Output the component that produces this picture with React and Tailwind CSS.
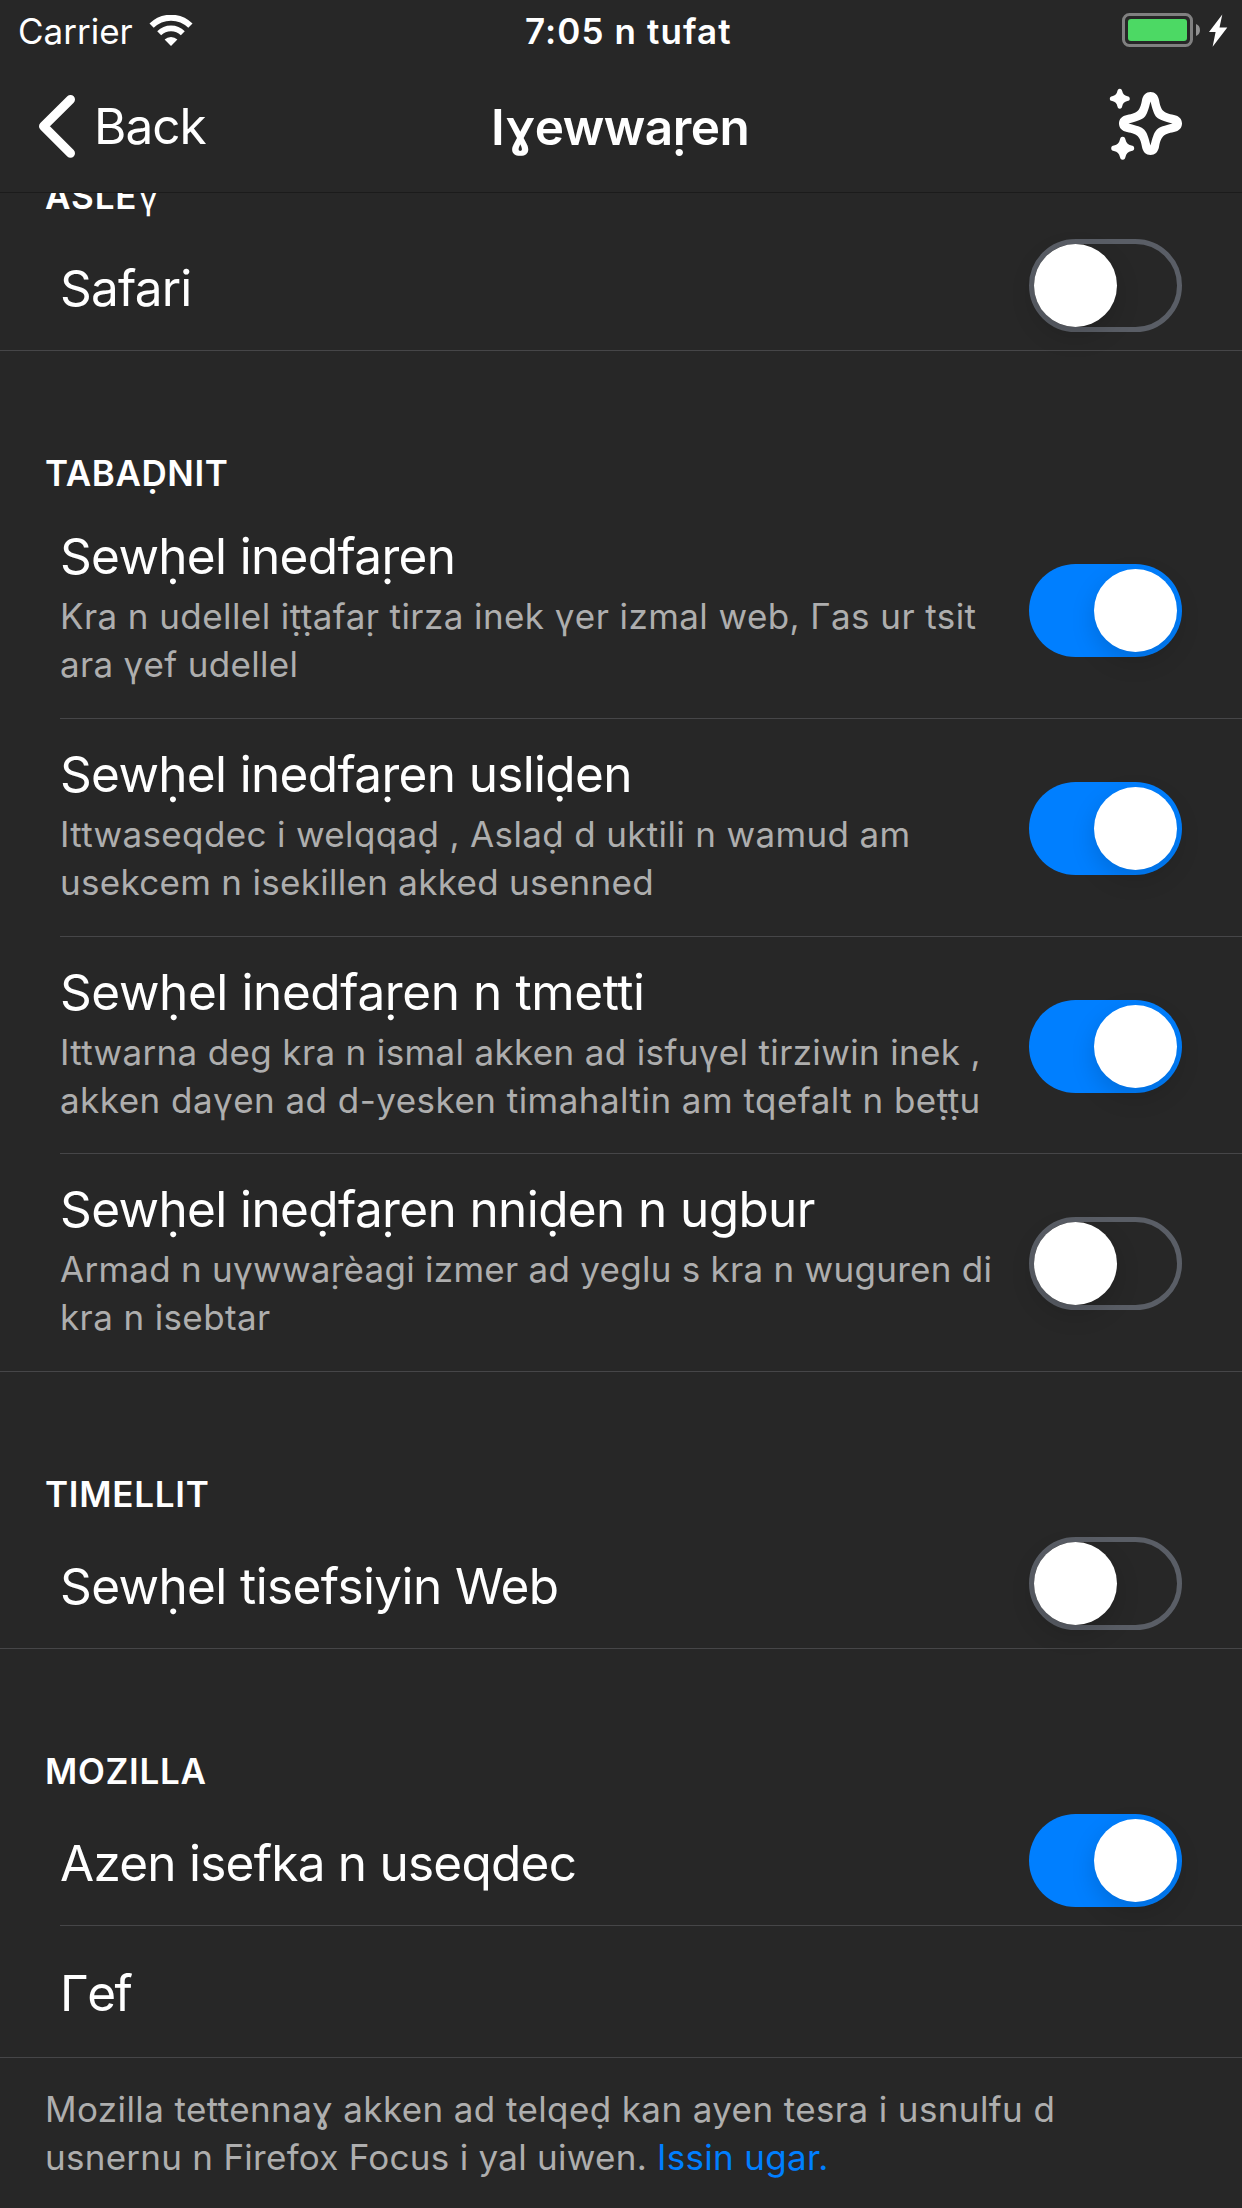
function Toggle({ on }) {
  return (
    <div
      role="switch"
      aria-checked={on}
      className={
        "flex h-[93px] w-[153px] shrink-0 items-center rounded-full " +
        (on ? "justify-end bg-[#007fff] px-[5px]" : "border-[5px] border-[#5a5e66]")
      }
    >
      <div
        className={
          "h-[83px] w-[83px] rounded-full bg-white shadow-[0_9px_24px_rgba(0,0,0,0.15)] " + (on ? "" : "-ml-[0.5px]")
        }
      />
    </div>
  );
}

function SectionTitle({ children, className }) {
  return (
    <h2 className={"flex h-[150px] shrink-0 items-end px-[45px] pb-[4px] text-[35px] leading-[48px] font-semibold text-white " + className}>
      {children}
    </h2>
  );
}

function Row({ height, last, textTop, toggleTop = "pt-[15px]", on, children }) {
  return (
    <div className={"shrink-0 " + height + (last ? " border-b border-[#464648]" : "")}>
      <div
        className={
          "flex h-full items-start justify-between pr-[60px] " +
          (last ? "pl-[60px]" : "ml-[60px] border-b border-[#464648]")
        }
      >
        <div className={textTop}>{children}</div>
        {on !== undefined && (
          <div className={toggleTop}>
            <Toggle on={on} />
          </div>
        )}
      </div>
    </div>
  );
}

function Title({ children, className = "" }) {
  return <div className={"text-[49.5px] leading-[60px] whitespace-nowrap text-white " + className}>{children}</div>;
}

const trackers = [
  {
    title: "Sewḥel inedfaṛen",
    titleClass: "tracking-[-0.66px]",
    lines: [
      ["Kra n udellel iṭṭafaṛ tirza inek γer izmal web, Γas ur tsit", "tracking-[0.42px]"],
      ["ara γef udellel", "tracking-[0.32px]"],
    ],
    on: true,
    height: "h-[218px]",
  },
  {
    title: "Sewḥel inedfaṛen usliḍen",
    titleClass: "tracking-[-0.66px]",
    lines: [
      ["Ittwaseqdec i welqqaḍ , Aslaḍ d uktili n wamud am", "tracking-[0.35px]"],
      ["usekcem n isekillen akked usenned", "tracking-[0.3px]"],
    ],
    on: true,
    height: "h-[218px]",
  },
  {
    title: "Sewḥel inedfaṛen n tmetti",
    titleClass: "tracking-[-0.4px]",
    lines: [
      ["Ittwarna deg kra n ismal akken ad isfuγel tirziwin inek ,", "tracking-[0.348px]"],
      ["akken daγen ad d-yesken timahaltin am tqefalt n beṭṭu", "tracking-[0.465px]"],
    ],
    on: true,
    height: "h-[217px]",
  },
  {
    title: "Sewḥel ineḍfaṛen nniḍen n ugbur",
    titleClass: "tracking-[-0.61px]",
    lines: [
      ["Armad n uγwwaṛèagi izmer ad yeglu s kra n wuguren di", "tracking-[0.265px]"],
      ["kra n isebtar", "tracking-[0.375px]"],
    ],
    on: false,
    height: "h-[218px]",
    last: true,
  },
];

function WifiIcon() {
  return (
    <svg className="ml-[16px] h-[32px] w-[44px]" viewBox="0 0 44 32" fill="none">
      <path d="M2.6 10.7 A 27.5 27.5 0 0 1 41.4 10.7" stroke="#fff" strokeWidth="6" />
      <path d="M10.2 18.2 A 16.8 16.8 0 0 1 33.8 18.2" stroke="#fff" strokeWidth="5.6" />
      <path d="M22 31 L15.6 24.6 A 9 9 0 0 1 28.4 24.6 Z" fill="#fff" />
    </svg>
  );
}

function BatteryIcon() {
  return (
    <svg className="h-[36px] w-[108px]" viewBox="1121 12 108 36">
      <rect x="1123.5" y="14.5" width="68" height="31" rx="6" fill="none" stroke="#808080" strokeWidth="3" />
      <rect x="1128" y="19" width="59" height="22" rx="3" fill="#4cd964" />
      <path d="M1196 24 C1201.3 25.5 1201.3 34.5 1196 36 Z" fill="#929292" />
      <path d="M1222.3 14.5 L1209 32 H1215.6 L1212.6 46.8 L1227.3 27.4 H1219.5 Z" fill="#fff" />
    </svg>
  );
}

function SparkleIcon() {
  const spark =
    "M0-10C1.6-10 2.1-9 2.4-7.6C3-4.6 4.6-3 7.6-2.4C9-2.1 10-1.6 10 0C10 1.6 9 2.1 7.6 2.4C4.6 3 3 4.6 2.4 7.6C2.1 9 1.6 10 0 10C-1.6 10-2.1 9-2.4 7.6C-3 4.6-4.6 3-7.6 2.4C-9 2.1-10 1.6-10 0C-10-1.6-9-2.1-7.6-2.4C-4.6-3-3-4.6-2.4-7.6C-2.1-9-1.6-10 0-10Z";
  return (
    <svg className="h-[76px] w-[76px]" viewBox="1108 86 76 76" fill="#fff">
      <g transform="translate(1150.5 123.5)">
        <path
          fillRule="evenodd"
          d="M0-31.5C4.5-31.5 7.5-28.5 8.5-23.5C9.5-18 10.5-15 12.7-12.7C15-10.5 18-9.5 23.5-8.5C28.5-7.5 31.5-4.5 31.5 0C31.5 4.5 28.5 7.5 23.5 8.5C18 9.5 15 10.5 12.7 12.7C10.5 15 9.5 18 8.5 23.5C7.5 28.5 4.5 31.5 0 31.5C-4.5 31.5-7.5 28.5-8.5 23.5C-9.5 18-10.5 15-12.7 12.7C-15 10.5-18 9.5-23.5 8.5C-28.5 7.5-31.5 4.5-31.5 0C-31.5-4.5-28.5-7.5-23.5-8.5C-18-9.5-15-10.5-12.7-12.7C-10.5-15-9.5-18-8.5-23.5C-7.5-28.5-4.5-31.5 0-31.5ZM0-22C-2-14-3.5-9-6.2-6.2C-9-3.5-14-2-22 0C-14 2-9 3.5-6.2 6.2C-3.5 9-2 14 0 22C2 14 3.5 9 6.2 6.2C9 3.5 14 2 22 0C14-2 9-3.5 6.2-6.2C3.5-9 2-14 0-22Z"
        />
      </g>
      <path transform="translate(1119.8 98.7)" d={spark} />
      <path transform="translate(1122.7 148.3) scale(1.15)" d={spark} />
    </svg>
  );
}

export default function App() {
  return (
    <div className="flex h-[2208px] w-[1242px] flex-col overflow-hidden bg-[#272727] font-['Inter',sans-serif]">
      <header className="h-[193px] shrink-0 border-b border-[#1b1b1b] text-white">
        <div className="grid h-[60px] grid-cols-[525px_1fr_auto] items-start pr-[13px] text-[35px] leading-[48px]">
          <div className="flex items-center pt-[7px] pl-[18px]">
            <span>Carrier</span>
            <WifiIcon />
          </div>
          <div className="pt-[7px] font-semibold tracking-[1.1px]">7:05 n tufat</div>
          <div className="pt-[12px]">
            <BatteryIcon />
          </div>
        </div>
        <div className="grid h-[132px] grid-cols-[491px_1fr_auto] items-start pr-[58px] text-[49.5px] leading-[60px]">
          <div className="flex items-start">
            <svg className="mt-[34px] ml-[36px] h-[64px] w-[42px]" viewBox="36 94 42 64" fill="none">
              <path d="M70.5 99.5L43.5 126.2L70.5 153.2" stroke="#fff" strokeWidth="9" strokeLinecap="round" strokeLinejoin="round" />
            </svg>
            <span className="mt-[36px] ml-[16px] tracking-[-1px]">Back</span>
          </div>
          <h1 className="mt-[37px] font-semibold tracking-[-0.5px]">Iɣewwaṛen</h1>
          <div className="mt-[26px]">
            <SparkleIcon />
          </div>
        </div>
      </header>

      <main className="min-h-0 flex-1 overflow-hidden">
        <div className="-mt-[119px] flex flex-col">
          <SectionTitle className="tracking-[0.9px]">
            ASLE<span className="ml-[1px] font-normal">γ</span>
          </SectionTitle>
          <Row height="h-[127px]" textTop="pt-[34px]" on={false} last>
            <Title className="tracking-[-0.8px]">Safari</Title>
          </Row>

          <SectionTitle className="tracking-[0.6px]">TABAḌNIT</SectionTitle>
          {trackers.map((t) => (
            <Row key={t.title} height={t.height} textTop="pt-[25px]" toggleTop="pt-[63px]" on={t.on} last={t.last}>
              <Title className={t.titleClass}>{t.title}</Title>
              <div className="mt-[6px] text-[35px] leading-[48px] whitespace-nowrap text-[#aeaeae]">
                {t.lines.map(([text, tracking]) => (
                  <div key={text} className={tracking}>
                    {text}
                  </div>
                ))}
              </div>
            </Row>
          ))}

          <SectionTitle className="tracking-[0.75px]">TIMELLIT</SectionTitle>
          <Row height="h-[127px]" textTop="pt-[34px]" on={false} last>
            <Title className="tracking-[-0.6px]">Sewḥel tisefsiyin Web</Title>
          </Row>

          <SectionTitle className="tracking-[0.7px]">MOZILLA</SectionTitle>
          <Row height="h-[127px]" textTop="pt-[34px]" on>
            <Title className="tracking-[-0.76px]">Azen isefka n useqdec</Title>
          </Row>
          <Row height="h-[132px]" textTop="pt-[37px]" last>
            <Title className="tracking-[-1.5px]">Γef</Title>
          </Row>

          <footer className="px-[45px] pt-[27px] text-[35px] leading-[48px] whitespace-nowrap text-[#aeaeae]">
            <div className="tracking-[0.39px]">Mozilla tettennaɣ akken ad telqeḍ kan ayen tesra i usnulfu d</div>
            <div className="flex gap-[10px]">
              <span className="tracking-[0.27px]">usnernu n Firefox Focus i yal uiwen.</span>
              <a className="tracking-[0.3px] text-[#007fff]">Issin ugar.</a>
            </div>
          </footer>
        </div>
      </main>
    </div>
  );
}
